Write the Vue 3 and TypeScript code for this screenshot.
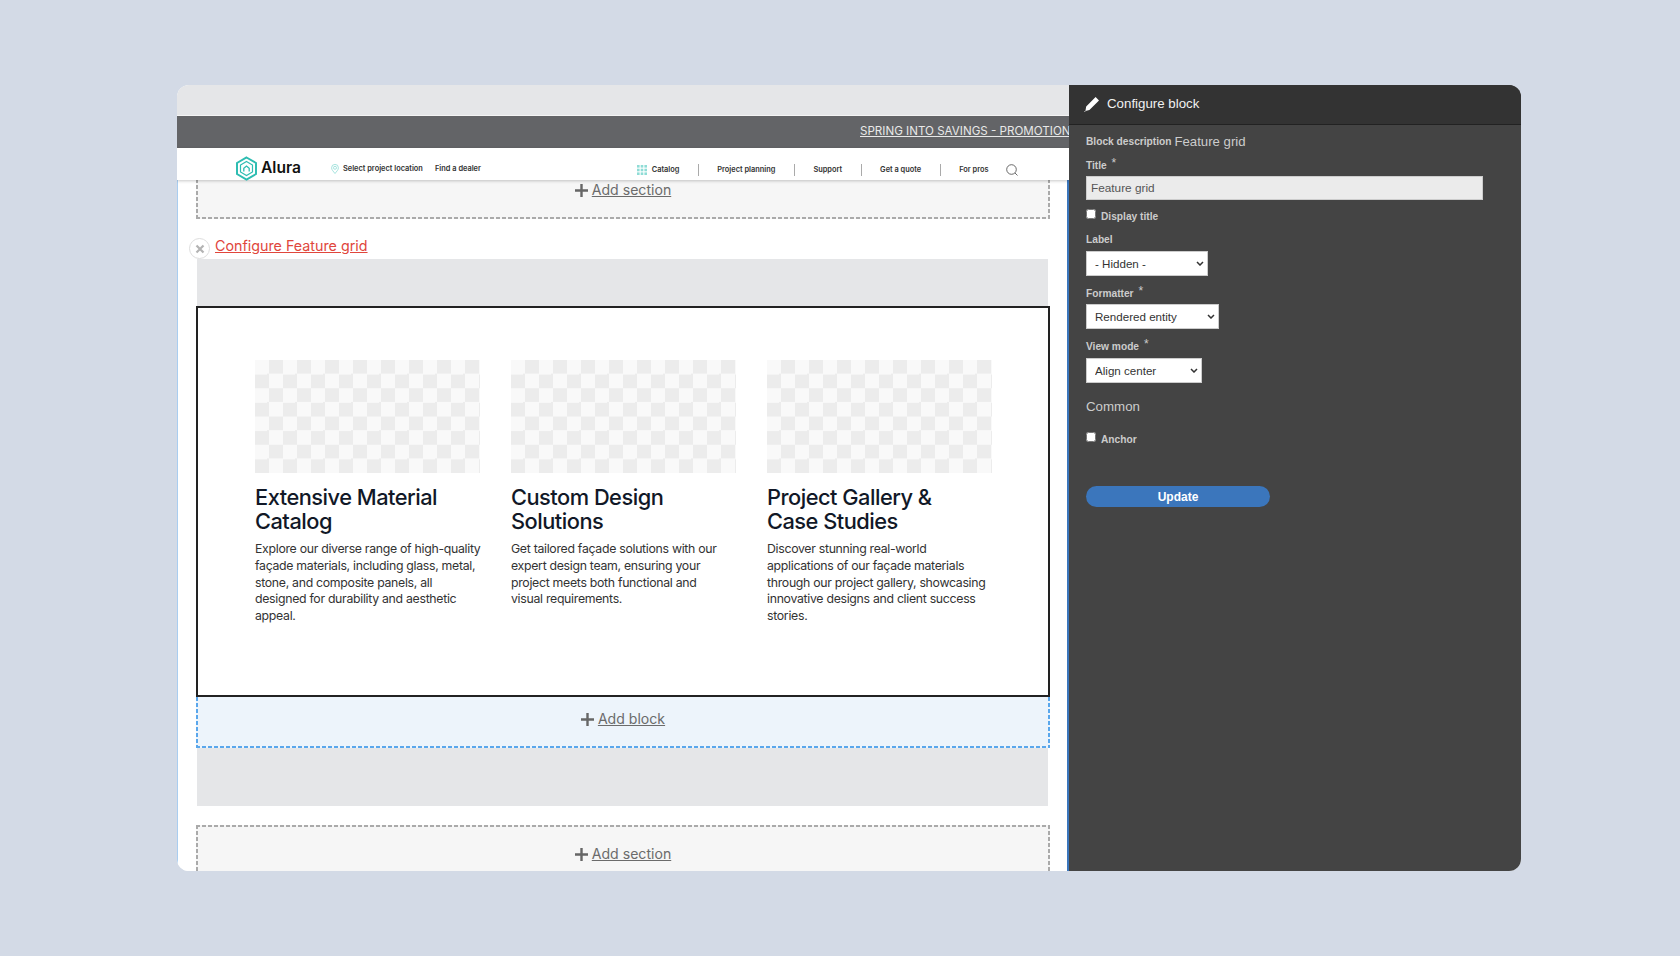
<script setup lang="ts">
interface Card { titleLines: string[]; lines: string[] }
const cards: Card[] = [
  { titleLines: ['Extensive Material', 'Catalog'], lines: ['Explore our diverse range of high-quality', 'façade materials, including glass, metal,', 'stone, and composite panels, all', 'designed for durability and aesthetic', 'appeal.'] },
  { titleLines: ['Custom Design', 'Solutions'], lines: ['Get tailored façade solutions with our', 'expert design team, ensuring your', 'project meets both functional and', 'visual requirements.'] },
  { titleLines: ['Project Gallery &', 'Case Studies'], lines: ['Discover stunning real-world', 'applications of our façade materials', 'through our project gallery, showcasing', 'innovative designs and client success', 'stories.'] },
]
const navItems: string[] = ['Project planning', 'Support', 'Get a quote', 'For pros']
</script>

<template>
  <div class="page">
    <div class="window">
      <div class="left">
        <div class="top-gray"></div>
        <div class="promo"><a class="promo-link">SPRING INTO SAVINGS - PROMOTIONS</a></div>
        <header class="site-header">
          <div class="logo">
            <svg width="23" height="25" viewBox="0 0 23 25" fill="none" stroke="#2fbdb2">
              <path d="M11.5 1.5 21 7v11l-9.500 5.500L2 18V7z" stroke-width="2" />
              <path d="M11.500 5.500 17.500 9v7l-6 3.500-6-3.500V9z" stroke-width="1.200" />
              <path d="M8.800 15.500v-3.200l2.700-2.300 2.700 2.300v3.200" stroke-width="1.300" />
            </svg>
            <span class="logo-text">Alura</span>
          </div>
          <div class="util-nav">
            <svg width="8" height="10" viewBox="0 0 8 10" fill="none" stroke="#8fdcd6" stroke-width="0.800">
              <path d="M4 9.500C2.500 7.500.6 6 .6 3.800a3.400 3.400 0 0 1 6.800 0C7.400 6 5.500 7.500 4 9.500z" />
              <circle cx="4" cy="3.800" r="1.500" />
            </svg>
            <span class="util-a">Select project location</span>
            <span class="util-b">Find a dealer</span>
          </div>
          <nav class="main-nav">
            <svg class="grid-icon" width="10" height="10" viewBox="0 0 10 10" fill="#8fdcd6">
              <rect x="0" y="0" width="2.600" height="2.600" /><rect x="3.700" y="0" width="2.600" height="2.600" /><rect x="7.400" y="0" width="2.600" height="2.600" />
              <rect x="0" y="3.700" width="2.600" height="2.600" /><rect x="3.700" y="3.700" width="2.600" height="2.600" /><rect x="7.400" y="3.700" width="2.600" height="2.600" />
              <rect x="0" y="7.400" width="2.600" height="2.600" /><rect x="3.700" y="7.400" width="2.600" height="2.600" /><rect x="7.400" y="7.400" width="2.600" height="2.600" />
            </svg>
            <span class="nav-item catalog">Catalog</span>
            <template v-for="item in navItems" :key="item">
              <span class="nav-sep"></span>
              <span class="nav-item">{{ item }}</span>
            </template>
            <svg class="search" width="12" height="12" viewBox="0 0 12 12" fill="none" stroke="#444" stroke-width="0.800">
              <circle cx="5.500" cy="5.500" r="4.800" />
              <path d="M9 9l2.500 2.500" />
            </svg>
          </nav>
        </header>
        <main class="content">
          <div class="add-section first">
            <svg class="plus" width="13" height="13" viewBox="0 0 13 13"><path d="M5.300 0h2.400v5.300H13v2.400H7.700V13H5.300V7.700H0V5.300h5.300z" fill="#666" /></svg>
            <a class="add-link">Add section</a>
          </div>
          <div class="config-row">
            <span class="close-btn">
              <svg width="10" height="10" viewBox="0 0 10 10"><path d="M1.500 1.500l7 7M8.500 1.500l-7 7" stroke="#b3b3b3" stroke-width="2.200" /></svg>
            </span>
            <a class="config-link">Configure Feature grid</a>
          </div>
          <div class="band band-top"></div>
          <section class="block">
            <div class="grid">
              <article v-for="card in cards" :key="card.titleLines[0]" class="card">
                <div class="checker"></div>
                <h3 class="card-title">
                  <span v-for="t in card.titleLines" :key="t" class="card-line">{{ t }}</span>
                </h3>
                <p class="card-body">
                  <span v-for="line in card.lines" :key="line" class="card-line">{{ line }}</span>
                </p>
              </article>
            </div>
          </section>
          <div class="add-block">
            <svg class="plus" width="13" height="13" viewBox="0 0 13 13"><path d="M5.300 0h2.400v5.300H13v2.400H7.700V13H5.300V7.700H0V5.300h5.300z" fill="#666" /></svg>
            <a class="add-link">Add block</a>
          </div>
          <div class="band band-bottom"></div>
          <div class="add-section last">
            <svg class="plus" width="13" height="13" viewBox="0 0 13 13"><path d="M5.300 0h2.400v5.300H13v2.400H7.700V13H5.300V7.700H0V5.300h5.300z" fill="#666" /></svg>
            <a class="add-link">Add section</a>
          </div>
        </main>
      </div>
      <aside class="panel">
        <div class="panel-head">
          <svg width="16" height="16" viewBox="0 0 16 16" fill="#fff"><path d="M11.600 1 15 4.400 5.400 14 1.400 15 2.200 10.600zM.4 15.200h.9v.7H.4z" /></svg>
          <span class="panel-title">Configure block</span>
        </div>
        <div class="panel-body">
          <div class="desc"><b class="flabel">Block description</b> <span class="desc-val">Feature grid</span></div>
          <label class="flabel f-title">Title <sup class="req">*</sup></label>
          <input class="text-in" type="text" value="Feature grid" />
          <label class="check check-1"><input type="checkbox" /><span class="flabel">Display title</span></label>
          <label class="flabel f-label">Label</label>
          <select class="sel sel-1"><option>- Hidden -</option></select>
          <label class="flabel f-formatter">Formatter <sup class="req">*</sup></label>
          <select class="sel sel-2"><option>Rendered entity</option></select>
          <label class="flabel f-mode">View mode <sup class="req">*</sup></label>
          <select class="sel sel-3"><option>Align center</option></select>
          <div class="common">Common</div>
          <label class="check check-2"><input type="checkbox" /><span class="flabel">Anchor</span></label>
          <button class="update" type="button">Update</button>
        </div>
      </aside>
    </div>
  </div>
</template>

<style>
html, body { margin: 0; padding: 0; background: #d3dae6; }
</style>

<style scoped>
.page {
  width: 1680px;
  height: 956px;
  background: #d3dae6;
  padding: 85px 0 0 177px;
  box-sizing: border-box;
  overflow: hidden;
}
.window {
  width: 1344px;
  height: 786px;
  border-radius: 12px;
  overflow: hidden;
  display: flex;
  background: #fff;
}
.left {
  width: 892px;
  flex: none;
  display: flex;
  flex-direction: column;
  overflow: hidden;
}
.top-gray { height: 30px; background: #e5e6e8; flex: none; }
.promo {
  height: 33px;
  box-sizing: border-box;
  padding: 0 0 2px 683px;
  flex: none;
  background: #636467;
  display: flex;
  align-items: center;
  white-space: nowrap;
  overflow: hidden;
  box-shadow: inset 0 1px 0 #f4f4f4;
}
.promo-link {
  font: 11.600px/14px Inter, sans-serif;
  color: #e8e8e8;
  text-decoration: underline;
}
.site-header {
  height: 32px;
  box-sizing: border-box;
  flex: none;
  background: #fff;
  display: flex;
  align-items: center;
  position: relative;
  z-index: 2;
  box-shadow: 0 1px 3px rgba(0, 0, 0, 0.22);
  padding: 8px 51px 0 58px;
}
.logo { display: flex; align-items: center; gap: 3px; width: 96px; flex: none; }
.logo-text {
  font: 600 15.600px/20px Inter, sans-serif;
  color: #111;
}
.util-nav {
  display: flex;
  align-items: center;
  margin-top: 2px;
  font: 600 7.400px/10px Inter, sans-serif;
  color: #333;
  white-space: nowrap;
}
.util-a { margin-left: 4px; width: 81px; flex: none; }
.util-b { margin-left: 11px; }
.main-nav {
  margin-left: auto;
  display: flex;
  align-items: center;
  gap: 18.500px;
  font: 600 7.400px/10px Inter, sans-serif;
  color: #333;
  white-space: nowrap;
  padding-top: 4px;
}
.grid-icon { margin-right: -14px; }
.nav-sep { width: 1px; height: 12px; background: #aaa; }
.search { margin-left: -1px; }
.content {
  flex: 1;
  min-height: 0;
  overflow: hidden;
  border-left: 1px solid #a9cdf0;
  border-right: 2px solid #3b76bc;
  background: #fff;
}
.add-section {
  height: 58px;
  box-sizing: border-box;
  margin: 0 17px 0 18px;
  background-color: #f6f6f6;
  background-image:
    linear-gradient(90deg, #aaa 4px, transparent 4px),
    linear-gradient(90deg, #aaa 4px, transparent 4px),
    linear-gradient(180deg, #aaa 4px, transparent 4px),
    linear-gradient(180deg, #aaa 4px, transparent 4px);
  background-size: 6px 2px, 6px 2px, 2px 6px, 2px 6px;
  background-position: 0 0, 0 100%, 0 0, 100% 0;
  background-repeat: repeat-x, repeat-x, repeat-y, repeat-y;
  display: flex;
  align-items: center;
  justify-content: center;
  gap: 4px;
}
.add-section.first { margin-top: -19px; }
.add-section.last { margin-top: 19px; }
.plus { flex: none; }
.add-link {
  font: 14.100px/18px Inter, sans-serif;
  color: #6b6b6b;
  text-decoration: underline;
}
.config-row {
  position: relative;
  height: 40px;
  box-sizing: border-box;
  padding: 18px 0 0 37px;
}
.config-link {
  font: 14.300px/18px Inter, sans-serif;
  color: #e0463c;
  text-decoration: underline;
}
.close-btn {
  position: absolute;
  left: 11px;
  top: 19px;
  width: 21px;
  height: 21px;
  box-sizing: border-box;
  border: 1px solid #ddd;
  border-radius: 50%;
  background: #fff;
  display: flex;
  align-items: center;
  justify-content: center;
}
.band { background: #e5e6e8; margin: 0 19px 0 19px; }
.band-top { height: 47px; }
.band-bottom { height: 58px; }
.block {
  height: 391px;
  box-sizing: border-box;
  margin: 0 17px 0 18px;
  border: 2px solid #222;
  padding: 52px 0 0 57px;
  background: #fff;
}
.grid {
  display: grid;
  grid-template-columns: repeat(3, 225px);
  column-gap: 31px;
}
.checker {
  height: 113px;
  background: repeating-conic-gradient(#ececec 0 25%, #f9f9f9 0 50%) 0 0 / 28px 28.250px;
}
.card-title {
  margin: 13px 0 0;
  font: 500 21.800px/23.500px Inter, sans-serif;
  letter-spacing: -0.500px;
  color: #111827;
}
.card-body {
  margin: 8px 0 0;
  font: 400 12.300px/16.800px Inter, sans-serif;
  letter-spacing: -0.300px;
  color: #333;
}
.card-line { display: block; white-space: nowrap; }
.add-block {
  height: 51px;
  box-sizing: border-box;
  margin: 0 17px 0 18px;
  padding-bottom: 7px;
  background-color: #edf4fb;
  background-image:
    linear-gradient(90deg, #5aa7ec 4px, transparent 4px),
    linear-gradient(180deg, #5aa7ec 4px, transparent 4px),
    linear-gradient(180deg, #5aa7ec 4px, transparent 4px);
  background-size: 6px 2px, 2px 6px, 2px 6px;
  background-position: 0 100%, 0 0, 100% 0;
  background-repeat: repeat-x, repeat-y, repeat-y;
  display: flex;
  align-items: center;
  justify-content: center;
  gap: 4px;
}
.panel {
  flex: 1;
  min-width: 0;
  background: #444;
  color: #ccc;
  font-family: "Liberation Sans", Arial, sans-serif;
  display: flex;
  flex-direction: column;
}
.panel-head {
  height: 40px;
  flex: none;
  box-sizing: border-box;
  background: #333;
  border-bottom: 1px solid #222;
  display: flex;
  align-items: center;
  gap: 7px;
  padding: 0 0 2px 15px;
}
.panel-title { font-size: 13.300px; color: #f0f0f0; }
.panel-body {
  padding: 8px 0 0 17px;
  display: flex;
  flex-direction: column;
  align-items: flex-start;
}
.flabel {
  font-size: 10.200px;
  font-weight: 700;
  line-height: 16px;
  height: 14px;
  color: #ccc;
  display: block;
}
.req { font-size: 12px; font-weight: 400; line-height: 0; margin-left: 2px; vertical-align: 2px; }
.desc { height: 16px; display: flex; align-items: center; gap: 3px; }
.desc-val { font-size: 13.200px; color: #ccc; }
.f-title { margin-top: 9px; }
.text-in {
  margin-top: 4px;
  width: 397px;
  height: 24px;
  box-sizing: border-box;
  border: 1px solid #ccc;
  background: #ebebeb;
  color: #555;
  font: 11.800px "Liberation Sans", Arial, sans-serif;
  padding: 0 4px;
  outline: none;
}
.check { display: flex; align-items: flex-start; gap: 5px; height: 14px; }
.check input { width: 10px; height: 10px; margin: 1px 0 0; flex: none; }
.check .flabel { margin-top: 1px; }
.check-1 { margin-top: 8px; }
.f-label { margin-top: 10px; }
.sel {
  appearance: none;
  box-sizing: border-box;
  background: #fff url("data:image/svg+xml,%3Csvg xmlns='http://www.w3.org/2000/svg' width='8' height='5' viewBox='0 0 8 5'%3E%3Cpath d='M1 1l3 3 3-3' fill='none' stroke='%23333' stroke-width='1.500'/%3E%3C/svg%3E") no-repeat right 3px center;
  border: 1px solid #ccc;
  border-radius: 0;
  color: #333;
  font: 11.600px "Liberation Sans", Arial, sans-serif;
  padding: 0 8px;
  margin: 0;
}
.sel-1 { margin-top: 5px; width: 122px; height: 25px; }
.f-formatter { margin-top: 10px; }
.sel-2 { margin-top: 4px; width: 133px; height: 25px; }
.f-mode { margin-top: 10px; }
.sel-3 { margin-top: 5px; width: 116px; height: 25px; }
.common { margin-top: 14px; height: 20px; line-height: 20px; font-size: 13.300px; color: #ccc; }
.check-2 { margin-top: 14px; }
.update {
  margin-top: 41px;
  width: 184px;
  height: 21px;
  border: none;
  border-radius: 11px;
  background: #3b76bc;
  color: #fff;
  font: 700 12px "Liberation Sans", Arial, sans-serif;
  padding: 0;
}
</style>
